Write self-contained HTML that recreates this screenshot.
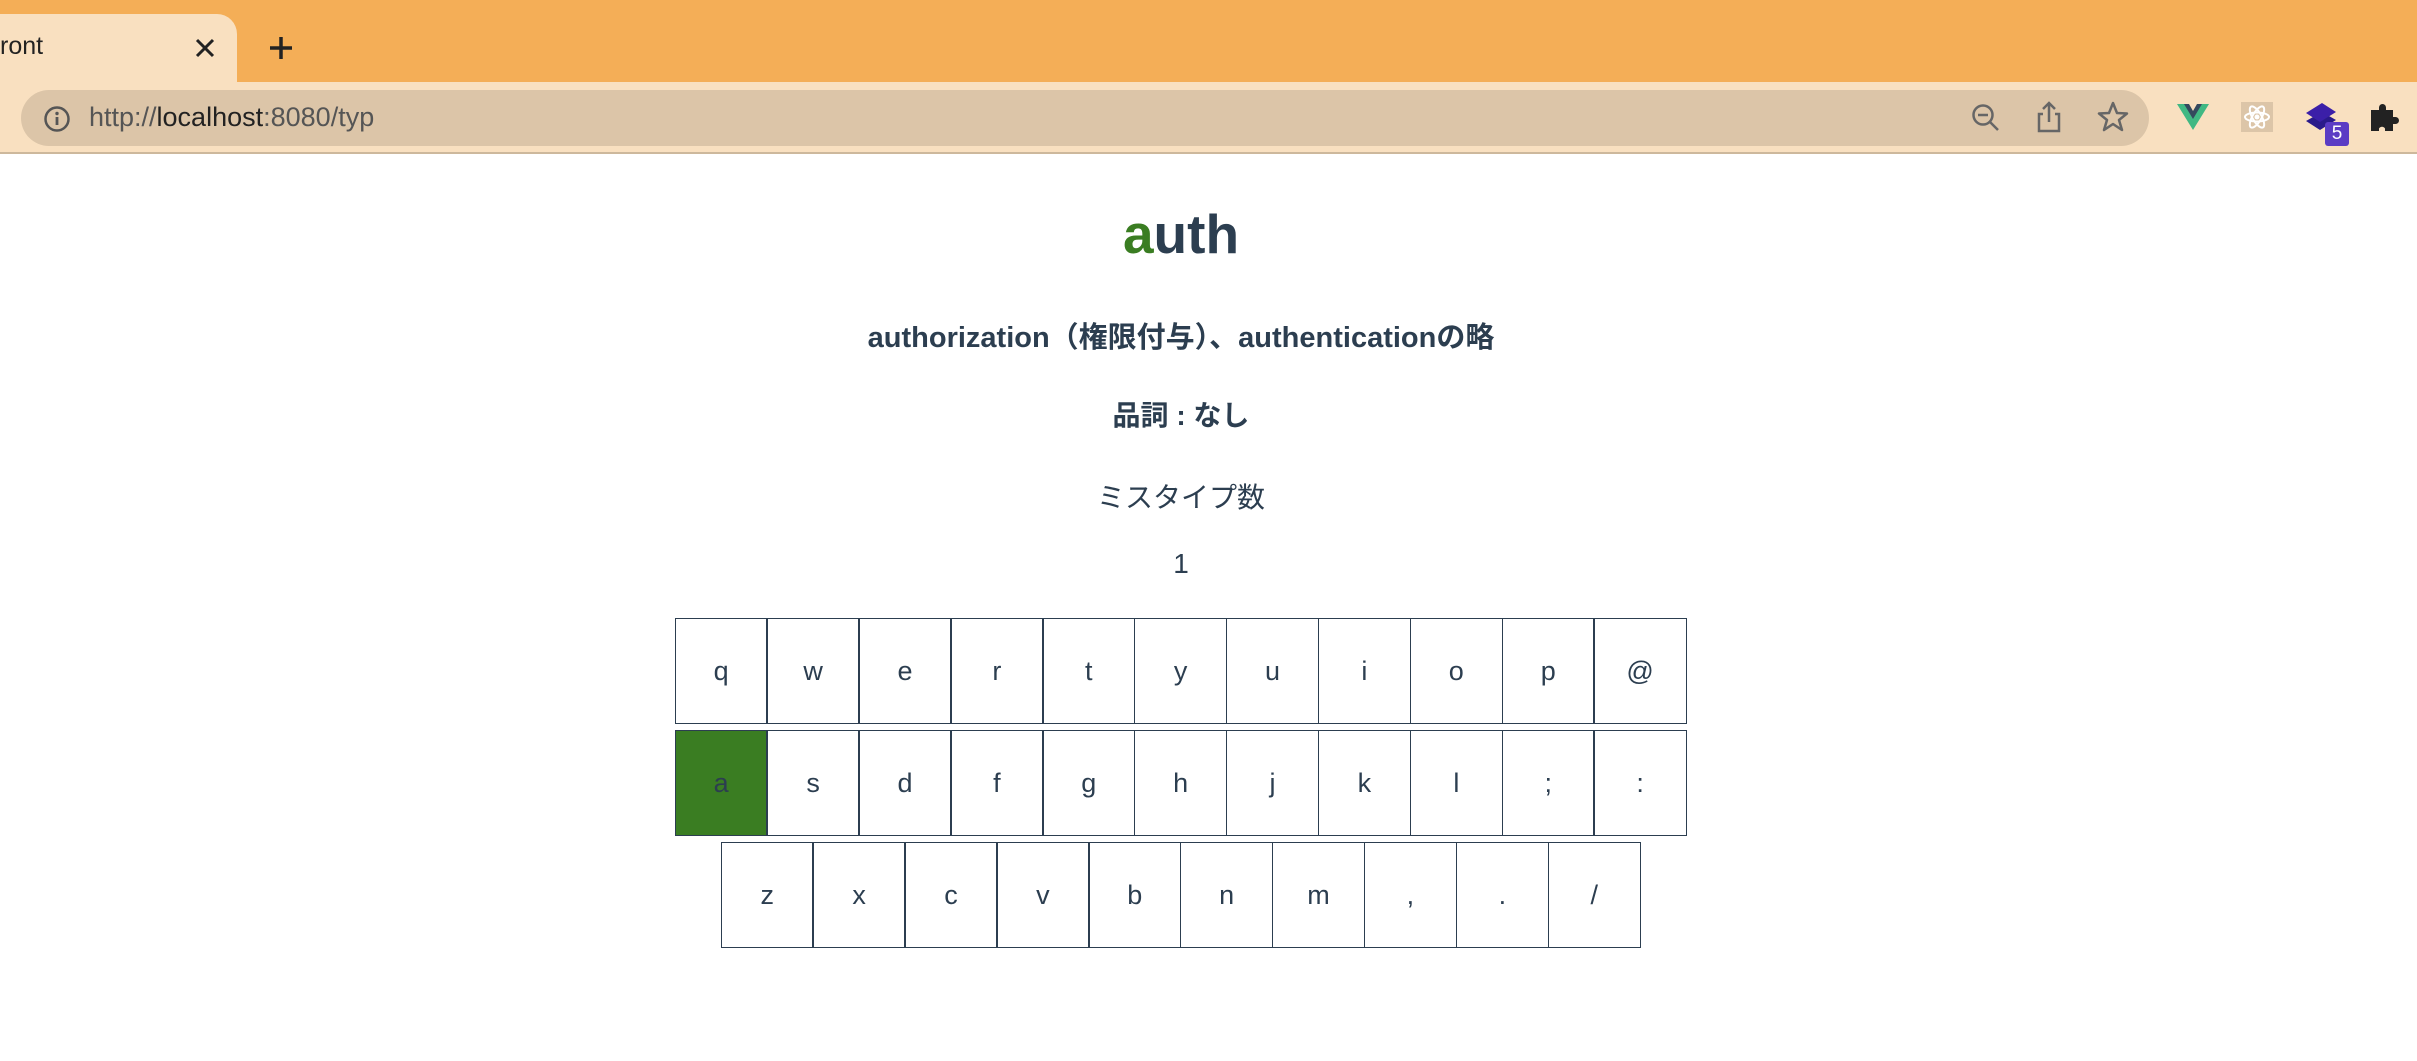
<!DOCTYPE html>
<html><head><meta charset="utf-8"><style>
*{margin:0;padding:0;box-sizing:border-box}
body{width:2417px;height:1061px;overflow:hidden;background:#fff;font-family:"Liberation Sans","Noto Sans CJK JP",sans-serif;color:#2c3e50;position:relative}
.top{position:absolute;left:0;top:0;width:2417px;height:82px;background:#f4ae57}
.tab{position:absolute;left:0;top:14px;width:237px;height:70px;background:#f9e0c0;border-radius:0 20px 0 0}
.tb{position:absolute;left:0;top:82px;width:2417px;height:72px;background:#f9e0c0;border-bottom:2px solid #cdb89c}
.url{position:absolute;left:21px;top:90px;width:2128px;height:56px;background:#dcc5a8;border-radius:28px}
.t{position:absolute;white-space:nowrap}
.c{position:absolute;left:0;width:2362px;text-align:center;white-space:nowrap}
.kb{position:absolute;display:flex}
.k{width:93.4px;height:106px;border:1.5px solid #2c3e50;margin-left:-1.5px;display:flex;align-items:center;justify-content:center;font-size:27px;font-weight:300;color:#2c3e50}
</style></head><body>
<div class="top"></div>
<div class="tab"></div>
<div class="t" style="left:0;top:32px;font-size:25px;color:#222">ront</div>
<svg class="t" style="left:193px;top:36px" width="24" height="24"><path d="M4 4L20 20M20 4L4 20" stroke="#222" stroke-width="3"/></svg>
<svg class="t" style="left:268px;top:35px" width="26" height="26"><path d="M13 2V24M2 13H24" stroke="#222" stroke-width="3.5"/></svg>
<div class="tb"></div>
<div class="url"></div>
<svg class="t" style="left:43px;top:105px" width="28" height="28"><circle cx="14" cy="14" r="11.5" fill="none" stroke="#555" stroke-width="2.5"/><path d="M14 12V20" stroke="#555" stroke-width="2.8"/><circle cx="14" cy="8.5" r="1.7" fill="#555"/></svg>
<div class="t" style="left:89px;top:102px;font-size:27px;color:#555">http://<span style="color:#222">localhost</span>:8080/typ</div>
<svg class="t" style="left:1970px;top:102px" width="32" height="32"><circle cx="13" cy="13" r="9.5" fill="none" stroke="#666" stroke-width="2.5"/><path d="M8 13H18M20 20L28 28" stroke="#666" stroke-width="2.5"/></svg>
<svg class="t" style="left:2034px;top:100px" width="30" height="34"><path d="M9 14H5V31H25V14H21M15 22V3M9 9L15 3L21 9" fill="none" stroke="#666" stroke-width="2.5"/></svg>
<svg class="t" style="left:2096px;top:100px" width="34" height="34"><path d="M17 3L21 13L31 13.5L23 20L26 30L17 24L8 30L11 20L3 13.5L13 13Z" fill="none" stroke="#666" stroke-width="2.5" stroke-linejoin="round"/></svg>
<svg class="t" style="left:2176px;top:103px" width="34" height="28"><path d="M1 1H10L17 12L24 1H33L17 27Z" fill="#41b883"/><path d="M8 1H13L17 8L21 1H26L17 16Z" fill="#35495e"/></svg>
<div class="t" style="left:2241px;top:102px;width:32px;height:30px;background:#dcc5a8"></div>
<svg class="t" style="left:2243px;top:103px" width="28" height="28"><g fill="none" stroke="#fff" stroke-width="2"><ellipse cx="14" cy="14" rx="12" ry="4.5"/><ellipse cx="14" cy="14" rx="12" ry="4.5" transform="rotate(60 14 14)"/><ellipse cx="14" cy="14" rx="12" ry="4.5" transform="rotate(-60 14 14)"/></g><circle cx="14" cy="14" r="2.5" fill="#fff"/></svg>
<svg class="t" style="left:2304px;top:100px" width="36" height="36"><path d="M2 21L18 12L32 20L16 30Z" fill="#2a1a8a"/><path d="M2 13L18 3L32 12L16 22Z" fill="#3b1fa8"/></svg>
<div class="t" style="left:2325px;top:122px;width:24px;height:24px;background:#5b3cc4;border-radius:3px;color:#fff;font-size:19px;text-align:center;line-height:24px">5</div>
<svg class="t" style="left:2368px;top:100px" width="36" height="36"><path d="M3 10H11V7.5A3.5 3.5 0 0 1 18 7.5V10H25V17H27.5A3.5 3.5 0 0 1 27.5 24H25V31H17V28.5A3.5 3.5 0 0 0 11 28.5V31H3Z" fill="#222"/></svg>

<div class="c" style="top:202px;font-size:55px;font-weight:600"><span style="color:#3a7d22">a</span>uth</div>
<div class="c" style="top:314px;font-size:29px;font-weight:bold">authorization（権限付与）、authenticationの略</div>
<div class="c" style="top:394px;font-size:28px;font-weight:bold">品詞 : なし</div>
<div class="c" style="top:476px;font-size:28px">ミスタイプ数</div>
<div class="c" style="top:548px;font-size:28px">1</div>

<div class="kb" style="left:676px;top:618px"><div class="k">q</div><div class="k">w</div><div class="k">e</div><div class="k">r</div><div class="k">t</div><div class="k">y</div><div class="k">u</div><div class="k">i</div><div class="k">o</div><div class="k">p</div><div class="k">@</div></div>
<div class="kb" style="left:676px;top:730px"><div class="k" style="background:#3a7d22">a</div><div class="k">s</div><div class="k">d</div><div class="k">f</div><div class="k">g</div><div class="k">h</div><div class="k">j</div><div class="k">k</div><div class="k">l</div><div class="k">;</div><div class="k">:</div></div>
<div class="kb" style="left:722px;top:842px"><div class="k">z</div><div class="k">x</div><div class="k">c</div><div class="k">v</div><div class="k">b</div><div class="k">n</div><div class="k">m</div><div class="k">,</div><div class="k">.</div><div class="k">/</div></div>
</body></html>
